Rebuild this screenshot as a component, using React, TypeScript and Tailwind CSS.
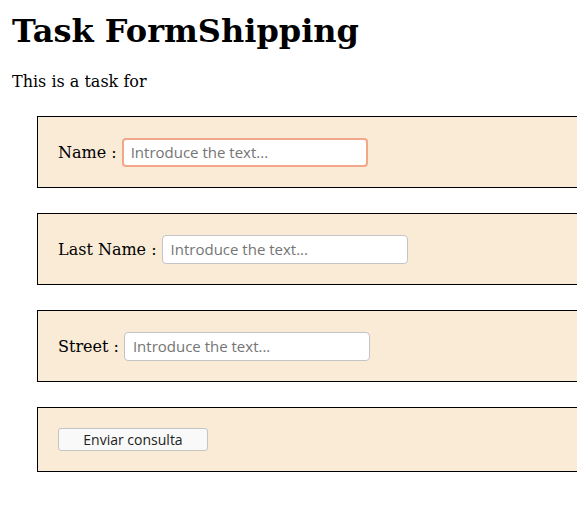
import React from "react";

function Row({ label, focused }: { label: string; focused?: boolean }) {
  return (
    <div className="ml-[37px] mb-[25px] w-[600px] h-[72px] border border-black bg-[#faebd7] flex items-center pl-[20px]">
      <span className="font-['DejaVu_Serif',serif] text-[16px] text-black leading-[19px]">
        {label} :
      </span>
      <input
        type="text"
        autoFocus={focused}
        placeholder="Introduce the text..."
        className={
          "ml-[5px] w-[246px] h-[29px] rounded-[4px] bg-white px-[8px] font-['Open_Sans',sans-serif] text-[15px] text-black placeholder:text-[#757575] outline-none " +
          (focused
            ? "border-2 border-[#f4a68b] pl-[7px]"
            : "border border-[#c4c4c4]")
        }
      />
    </div>
  );
}

export default function App() {
  return (
    <div className="w-full overflow-hidden bg-white pb-[40px] font-['DejaVu_Serif',serif]">
      <div className="pl-[12px]">
        <h1 className="pt-[13px] text-[32px] font-bold leading-[37px] text-black">
          Task FormShipping
        </h1>
        <p className="mt-[22px] text-[16px] leading-[19px] text-black">
          This is a task for
        </p>
      </div>
      <div className="mt-[25px]">
        <Row label="Name" focused />
        <Row label="Last Name" />
        <Row label="Street" />
        <div className="ml-[37px] w-[600px] h-[65px] border border-black bg-[#faebd7] flex items-start pl-[20px] pt-[20px]">
          <button
            type="button"
            className="w-[150px] h-[23px] rounded-[3px] border border-[#c4c4c4] bg-[#f9f9f9] font-['Open_Sans',sans-serif] text-[14px] text-[#222] leading-none"
          >
            Enviar consulta
          </button>
        </div>
      </div>
    </div>
  );
}
